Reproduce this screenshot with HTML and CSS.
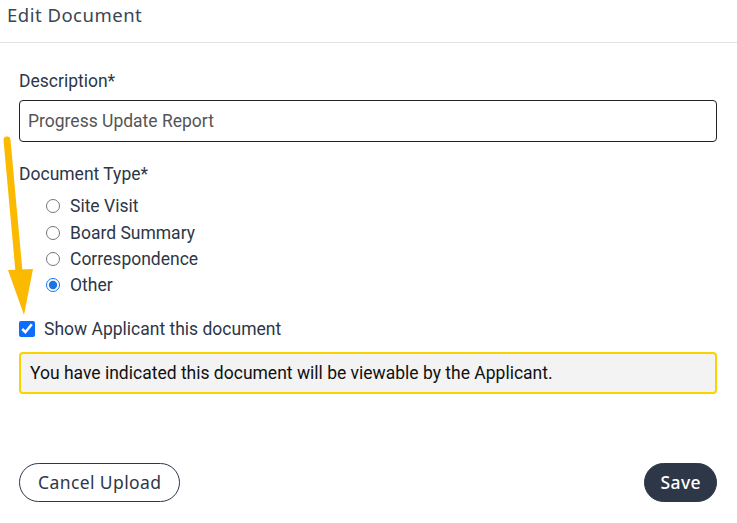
FILE: index.html
```html
<!DOCTYPE html>
<html lang="en">
<head>
    <meta charset="UTF-8">
    <meta name="viewport" content="width=device-width, initial-scale=1.0">
    <title>Edit Document</title>
    <link rel="stylesheet" href="styles.css">
</head>
<body>
    <div class="header">
        <h1>Edit Document</h1>
    </div>
    <form class="form">
        <label class="label" for="description">Description*</label>
        <input class="text-input" id="description" type="text" value="Progress Update Report">

        <div class="label type-label">Document Type*</div>
        <div class="radio-list">
            <label class="radio"><input type="radio" name="doctype"> Site Visit</label>
            <label class="radio"><input type="radio" name="doctype"> Board Summary</label>
            <label class="radio"><input type="radio" name="doctype"> Correspondence</label>
            <label class="radio"><input type="radio" name="doctype" checked> Other</label>
        </div>

        <label class="checkbox"><input type="checkbox" checked> Show Applicant this document</label>
        <div class="notice">You have indicated this document will be viewable by the Applicant.</div>

        <div class="actions">
            <button type="button" class="btn btn-outline">Cancel Upload</button>
            <button type="button" class="btn btn-dark">Save</button>
        </div>
    </form>

    <svg class="arrow" width="40" height="190" viewBox="0 0 40 190">
        <path d="M7 10 L19 142" stroke="#fbb900" stroke-width="7" stroke-linecap="round" fill="none"/>
        <polygon points="8,140 33,139 24,185" fill="#fbb900"/>
    </svg>
</body>
</html>
```

FILE: styles.css
```css
body {
    margin: 0;
    font-family: Roboto, Arial, sans-serif;
    color: #2d3748;
    background: #ffffff;
    position: relative;
}
.header {
    padding: 3px 7px 0;
    height: 39px;
    border-bottom: 1px solid #e3e3e3;
}
h1 {
    margin: 0;
    font-family: "Noto Sans", "Open Sans", sans-serif;
    font-weight: 400;
    font-size: 18.5px;
    letter-spacing: 0.5px;
    color: #3a4555;
    line-height: 24px;
}
.form {
    padding: 26px 20px 0 19px;
    display: flex;
    flex-direction: column;
}
.label {
    font-size: 17.5px;
    line-height: 24px;
    color: #2d3748;
}
.text-input {
    margin-top: 7px;
    height: 42px;
    box-sizing: border-box;
    border: 1px solid #222;
    border-radius: 4px;
    padding: 0 8px;
    font-family: Roboto, Arial, sans-serif;
    font-size: 17.5px;
    color: #555;
}
.type-label {
    margin-top: 20px;
}
.radio-list {
    display: flex;
    flex-direction: column;
    padding-left: 27px;
    margin-top: 7px;
}
.radio {
    display: flex;
    align-items: center;
    gap: 10px;
    font-size: 17.5px;
    height: 26.4px;
    color: #2d3748;
}
.radio input {
    margin: 0;
    width: 14px;
    height: 14px;
    accent-color: #1a73e8;
}
.checkbox {
    margin-top: 18px;
    display: flex;
    align-items: center;
    gap: 9px;
    font-size: 17.5px;
    line-height: 24px;
    color: #2d3748;
}
.checkbox input {
    margin: 0;
    width: 16px;
    height: 16px;
    accent-color: #0d6efd;
}
.notice {
    margin-top: 11px;
    height: 42px;
    box-sizing: border-box;
    border: 2px solid #fad400;
    border-radius: 4px;
    background: #f3f3f3;
    padding: 0 9px;
    display: flex;
    align-items: center;
    font-size: 17.5px;
    color: #111;
}
.actions {
    margin-top: 69px;
    display: flex;
    justify-content: space-between;
}
.btn {
    font-family: "Noto Sans", "Open Sans", sans-serif;
    font-size: 17.5px;
    letter-spacing: 0.4px;
    height: 39px;
    border-radius: 20px;
    padding: 0 15px;
    cursor: pointer;
}
.btn-outline {
    background: #fff;
    border: 1px solid #2d3748;
    color: #2d3748;
    padding: 0 18px;
}
.btn-dark {
    background: #2d3748;
    border: 1px solid #2d3748;
    color: #fff;
    font-weight: 500;
}
.arrow {
    position: absolute;
    left: 0;
    top: 130px;
}
```
